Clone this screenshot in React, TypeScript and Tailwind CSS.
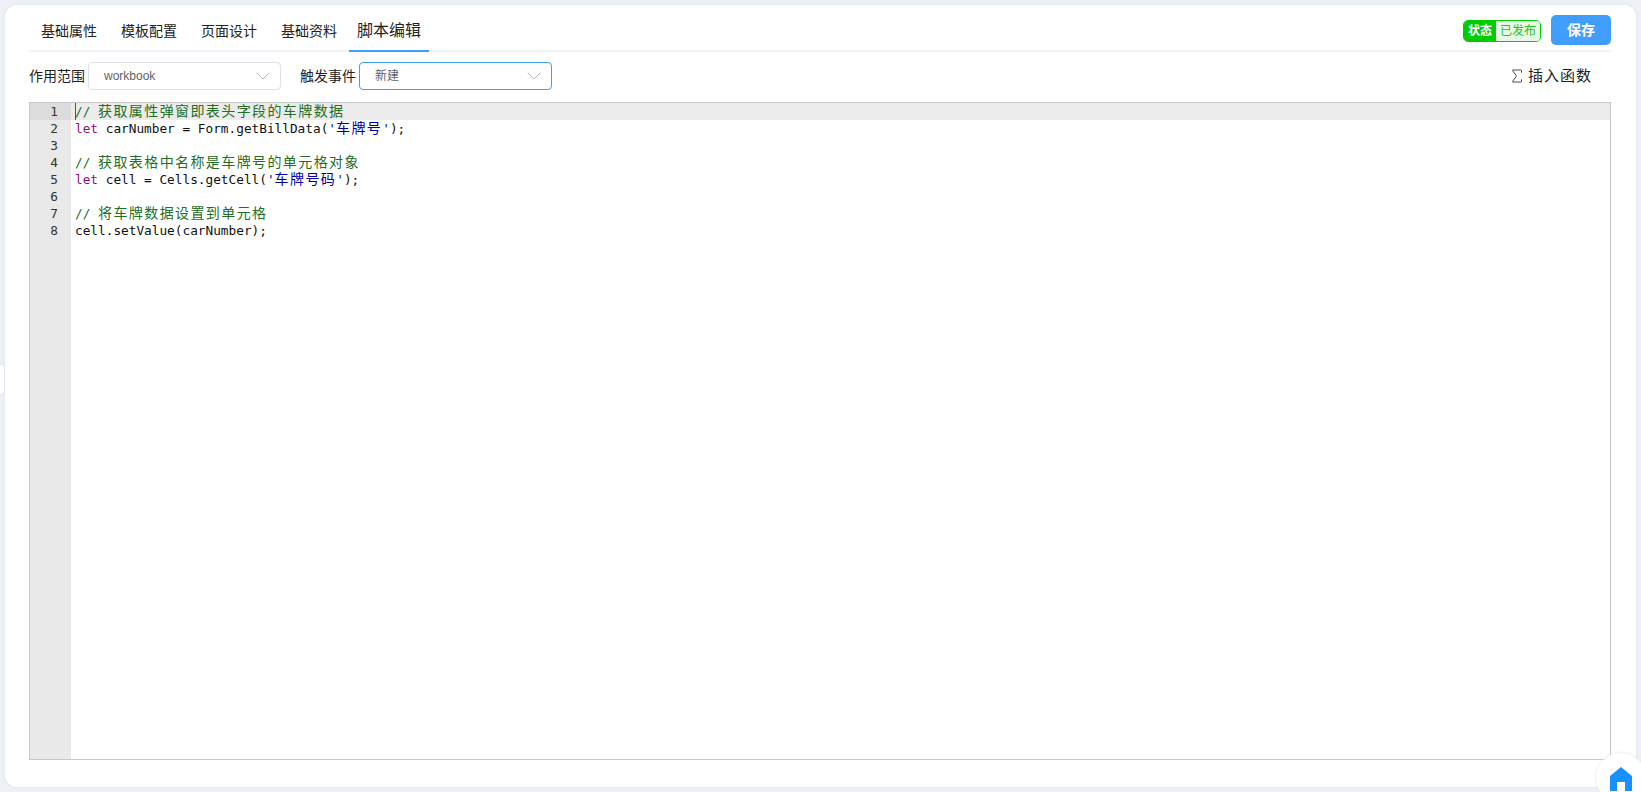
import React from 'react';
import { ChevronDown, Sigma } from 'lucide-react';

const sans = 'font-["Liberation_Sans","Noto_Sans_CJK_SC",sans-serif]';

const tabs = ['基础属性', '模板配置', '页面设计', '基础资料'];

// a run of code: CJK glyphs take two cells in the editor
function Zh({ children }: { children: React.ReactNode }) {
  return <span className="text-[14px] tracking-[1.4px]">{children}</span>;
}

function Comment({ text }: { text: string }) {
  return (
    <span className="text-[#236e25]">
      {'// '}
      <Zh>{text}</Zh>
    </span>
  );
}

function Let() {
  return <span className="text-[#930f80]">let</span>;
}

const lines: React.ReactNode[] = [
  <Comment text="获取属性弹窗即表头字段的车牌数据" />,
  <>
    <Let /> carNumber = Form.getBillData(<span className="text-[#0000a8]">'<Zh>车牌号</Zh>'</span>);
  </>,
  '',
  <Comment text="获取表格中名称是车牌号的单元格对象" />,
  <>
    <Let /> cell = Cells.getCell(<span className="text-[#0000a8]">'<Zh>车牌号码</Zh>'</span>);
  </>,
  '',
  <Comment text="将车牌数据设置到单元格" />,
  'cell.setValue(carNumber);',
];

function Select({ label, value, focused }: { label: string; value: string; focused?: boolean }) {
  return (
    <div className="flex items-center gap-[3px]">
      <span className="text-[14px] text-[#222]">{label}</span>
      <div
        className={`flex h-[28px] w-[193px] items-center justify-between rounded border bg-white pl-[15px] pr-[5px] ${
          focused ? 'border-[#409eff]' : 'border-[#dcdfe6]'
        }`}
      >
        <span className="text-[12px] text-[#606266]">{value}</span>
        <ChevronDown size={24} strokeWidth={0.8} className="text-[#a8abb2]" />
      </div>
    </div>
  );
}

export default function App() {
  return (
    <div className={`relative h-[792px] w-[1641px] overflow-hidden bg-[#eef0f6] p-[5px] ${sans}`}>
      <div className="flex h-[782px] flex-col rounded-[12px] bg-white pl-[24px] pr-[25px] shadow-[0_0_3px_#d5dff0]">
        {/* tabs */}
        <div className="flex h-[47px] items-stretch justify-between border-b-2 border-[#f0f2f5]">
          <div className="flex">
            {tabs.map((t) => (
              <div key={t} className="-mb-[2px] flex w-[80px] items-center justify-center pt-[5px] text-[14px] text-[#222]">
                {t}
              </div>
            ))}
            <div className="-mb-[2px] flex w-[80px] items-center justify-center border-b-2 border-[#409eff] pt-[7px] text-[16px] text-[#222]">
              脚本编辑
            </div>
          </div>
          <div className="flex items-start gap-[10px] pt-[10px]">
            <div className="mt-[5px] flex h-[22px] w-[78px] overflow-hidden rounded-[5px] border border-[#00cc00] text-[12px] leading-[21px]">
              <div className="w-[32px] bg-[#00cc00] text-center font-bold text-white">状态</div>
              <div className="flex-1 bg-[#e6f9e6] text-center text-[#22c322]">已发布</div>
            </div>
            <div className="flex h-[30px] w-[60px] items-center justify-center rounded-[5px] bg-[#409eff] text-[14px] font-bold text-white">
              保存
            </div>
          </div>
        </div>

        {/* filters */}
        <div className="flex h-[50px] items-center justify-between pb-[2px]">
          <div className="flex items-center gap-[19px]">
            <Select label="作用范围" value="workbook" />
            <Select label="触发事件" value="新建" focused />
          </div>
          <div className="flex items-center gap-[2px] pr-[19px] text-[#222]">
            <Sigma size={18} strokeWidth={1.1} />
            <span className="text-[15px] tracking-[1px]">插入函数</span>
          </div>
        </div>

        {/* editor */}
        <div className="flex h-[658px] border border-[#c8c8c8] font-['DejaVu_Sans_Mono','Noto_Sans_CJK_SC',monospace] text-[12.75px] leading-[17px] text-[#111]">
          <div className="w-[41px] shrink-0 bg-[#e9e9e9] text-[#333]">
            {lines.map((_, i) => (
              <div key={i} className={`h-[17px] pr-[13px] text-right ${i === 0 ? 'bg-[#dcdcdc]' : ''}`}>
                {i + 1}
              </div>
            ))}
          </div>
          <div className="flex-1">
            {lines.map((l, i) => (
              <div key={i} className={`h-[17px] whitespace-pre pl-[4px] ${i === 0 ? 'bg-[#ebebeb]' : ''}`}>
                {i === 0 && <span className="-mr-px inline-block h-[17px] w-px bg-[#555] align-top" />}
                {l}
              </div>
            ))}
          </div>
        </div>
      </div>

      {/* collapse handle on the left edge */}
      <div className="absolute left-0 top-[365px] h-[29px] w-[4px] rounded-r-[3px] bg-white shadow-[0_0_2px_#c5d0e6]" />

      {/* floating home button */}
      <div className="absolute left-[1596px] top-[753px] flex h-[50px] w-[50px] items-start justify-center rounded-full bg-white pt-[14px] shadow-[0_0_3px_#d9dfec]">
        <svg width="24" height="24" viewBox="0 0 24 24">
          <path fill="#1890ff" d="M12 0 L23 9 V24 H16 V15 H8 V24 H1 V9 Z" />
        </svg>
      </div>
    </div>
  );
}
